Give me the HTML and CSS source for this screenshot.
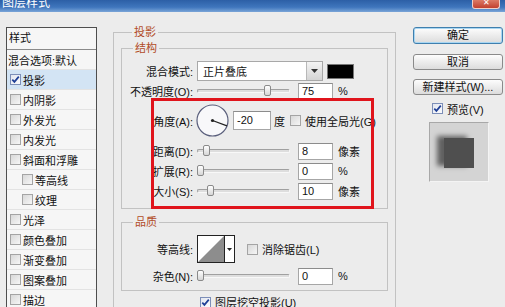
FILE: index.html
```html
<!DOCTYPE html>
<html>
<head>
<meta charset="utf-8">
<link rel="stylesheet" href="styles.css">
</head>
<body>
<div class="win">
  <div class="titlebar"><span class="title">图层样式</span><span class="close">✕</span></div>
  <div class="content">
    <div class="stylelist">
      <div class="lhead">样式</div>
      <div class="litem first">混合选项:默认</div>
      <div class="litem sel"><span class="cb on"><svg width="9" height="9" viewBox="0 0 9 9"><path d="M1.3 4.6 L3.4 6.9 L7.8 1.6" stroke="#1f3f96" stroke-width="1.7" fill="none"/></svg></span>投影</div>
      <div class="litem"><span class="cb"></span>内阴影</div>
      <div class="litem"><span class="cb"></span>外发光</div>
      <div class="litem"><span class="cb"></span>内发光</div>
      <div class="litem"><span class="cb"></span>斜面和浮雕</div>
      <div class="litem sub"><span class="cb"></span>等高线</div>
      <div class="litem sub"><span class="cb"></span>纹理</div>
      <div class="litem"><span class="cb"></span>光泽</div>
      <div class="litem"><span class="cb"></span>颜色叠加</div>
      <div class="litem"><span class="cb"></span>渐变叠加</div>
      <div class="litem"><span class="cb"></span>图案叠加</div>
      <div class="litem"><span class="cb"></span>描边</div>
    </div>

    <fieldset class="grp outer">
      <legend>投影</legend>
      <fieldset class="grp inner">
        <legend>结构</legend>
        <div class="row r-blend">
          <span class="lbl">混合模式:</span>
          <div class="select"><span class="seltext">正片叠底</span><span class="seldrop"><svg width="7" height="4" viewBox="0 0 7 4"><path d="M0 0 H7 L3.5 4 Z" fill="#333"/></svg></span></div>
          <span class="swatch"></span>
        </div>
        <div class="row r-op">
          <span class="lbl">不透明度(O):</span>
          <div class="slider"><div class="track"></div><span class="knob" style="left:67px"></span></div>
          <span class="input">75</span><span class="unit">%</span>
        </div>
        <div class="row r-angle">
          <span class="lbl">角度(A):</span>
          <svg class="dial" width="33" height="33" viewBox="0 0 33 33"><circle cx="16.5" cy="16.5" r="15.5" fill="#f8f8fa" stroke="#5a5f7c" stroke-width="1.2"/><line x1="16.5" y1="16.5" x2="31" y2="21.8" stroke="#222" stroke-width="1.3"/><circle cx="16.5" cy="16.5" r="1.6" fill="#222"/></svg>
          <span class="input ang">-20</span><span class="unit deg">度</span>
          <span class="cb gl"></span><span class="cbtext">使用全局光(G)</span>
        </div>
        <div class="row r-dist">
          <span class="lbl">距离(D):</span>
          <div class="slider"><div class="track"></div><span class="knob" style="left:6px"></span></div>
          <span class="input">8</span><span class="unit">像素</span>
        </div>
        <div class="row r-sm">
          <span class="lbl">扩展(R):</span>
          <div class="slider"><div class="track"></div><span class="knob" style="left:0px"></span></div>
          <span class="input">0</span><span class="unit">%</span>
        </div>
        <div class="row r-sm">
          <span class="lbl">大小(S):</span>
          <div class="slider"><div class="track"></div><span class="knob" style="left:10px"></span></div>
          <span class="input">10</span><span class="unit">像素</span>
        </div>
      </fieldset>

      <fieldset class="grp quality">
        <legend>品质</legend>
        <div class="row r-contour">
          <span class="lbl">等高线:</span>
          <div class="contour">
            <span class="cshape"><svg width="26" height="26" viewBox="0 0 26 26"><path d="M0 26 L26 0 L26 26 Z" fill="#8d8d8d"/></svg></span>
            <span class="cdrop"><svg width="5" height="3" viewBox="0 0 5 3"><path d="M0 0 H5 L2.5 3 Z" fill="#222"/></svg></span>
          </div>
          <span class="cb aa"></span><span class="cbtext">消除锯齿(L)</span>
        </div>
        <div class="row r-noise">
          <span class="lbl">杂色(N):</span>
          <div class="slider"><div class="track"></div><span class="knob" style="left:0px"></span></div>
          <span class="input">0</span><span class="unit">%</span>
        </div>
      </fieldset>

      <div class="knockout"><span class="cb on"><svg width="9" height="9" viewBox="0 0 9 9"><path d="M1.3 4.6 L3.4 6.9 L7.8 1.6" stroke="#1f3f96" stroke-width="1.7" fill="none"/></svg></span><span class="cbtext">图层挖空投影(U)</span></div>
    </fieldset>

    <div class="side">
      <div class="btn default">确定</div>
      <div class="btn b2">取消</div>
      <div class="btn b3">新建样式(W)...</div>
      <div class="preview-row"><span class="cb on"><svg width="9" height="9" viewBox="0 0 9 9"><path d="M1.3 4.6 L3.4 6.9 L7.8 1.6" stroke="#1f3f96" stroke-width="1.7" fill="none"/></svg></span><span class="cbtext">预览(V)</span></div>
      <div class="preview"><div class="square"></div></div>
    </div>
  </div>
  <div class="redbox"></div>
</div>
</body>
</html>
```

FILE: styles.css
```css
* { box-sizing: border-box; }
html, body { margin: 0; padding: 0; }
body {
  width: 505px; height: 307px; overflow: hidden;
  background: #ececec;
  font-family: "Liberation Sans", "Noto Sans CJK SC", sans-serif;
  font-size: 11px; color: #111;
}
.win { position: relative; width: 505px; height: 307px; overflow: hidden; }

.titlebar {
  height: 12px;
  background: linear-gradient(#2c5fa6, #3f76bd 60%, #7aa5d8);
  display: flex; justify-content: space-between; overflow: hidden;
}
.title { color: #fff; font-size: 12px; line-height: 12px; margin: -3px 0 0 2px; }
.close {
  width: 28px; height: 9px; margin-right: 5px;
  background: linear-gradient(#dc7a66, #c2412f);
  border: 1px solid #f0d0c8; border-top: 0; border-radius: 0 0 3px 3px;
  color: #fff; font-size: 8px; line-height: 6px; text-align: center;
}

.content { display: flex; align-items: flex-start; }

.stylelist {
  width: 91px; height: 300px; margin: 15px 0 0 6px;
  border: 1px solid #4e4e4e; background: #f6f6f6;
}
.lhead { height: 22px; line-height: 21px; padding-left: 2px; border-bottom: 1px solid #8a8a8a; }
.litem {
  height: 20px; display: flex; align-items: center; white-space: nowrap;
  padding-left: 3px; border-bottom: 1px solid #e3e3e3;
}
.litem.first { padding-left: 1px; }
.litem.sub { padding-left: 15px; }
.litem.sel { background: #d3e4f4; }
.litem .cb { margin-right: 2px; }

.cb {
  width: 11px; height: 11px; flex-shrink: 0;
  border: 1px solid #a4a4a4;
  background: linear-gradient(135deg, #d8d8d8, #f6f6f6);
  display: inline-flex; align-items: center; justify-content: center;
}
.cb.on { border-color: #7d8fb8; background: linear-gradient(135deg, #e2e6ef, #fbfbfd); }
.cbtext { margin-left: 4px; white-space: nowrap; }

fieldset.grp {
  margin: 0; min-width: 0;
  border: 1px solid #c2c2c2;
}
fieldset.grp legend {
  padding: 0 2px; margin-left: 11px;
  color: #b24c28; font-size: 11px; line-height: 14px;
}
.outer { width: 283px; height: 300px; margin: 13px 0 0 16px !important; padding: 0 7px; }
.inner { margin-top: 2px !important; padding: 0 0 8px 0; }
.quality { margin-top: 6px !important; padding: 0 0 5px 0; }

.row { display: flex; align-items: center; white-space: nowrap; }
.lbl { width: 71px; flex-shrink: 0; text-align: right; }
.r-blend { margin-top: 6px; height: 20px; }
.r-op { margin-top: 1px; height: 18px; }
.r-angle { margin-top: 4px; height: 33px; }
.r-dist { margin-top: 5px; height: 18px; }
.r-sm { margin-top: 2px; height: 18px; }
.r-contour { margin-top: 6px; height: 28px; }
.r-noise { margin-top: 4px; height: 18px; }

.select {
  margin-left: 4px; width: 126px; height: 20px;
  border: 1px solid #a8a8a8; background: #fff;
  display: flex; align-items: center; justify-content: space-between;
}
.seltext { padding-left: 5px; }
.seldrop {
  width: 16px; height: 18px; border-left: 1px solid #b8b8b8;
  background: linear-gradient(#f4f4f4, #d4d4d4);
  display: flex; align-items: center; justify-content: center;
}
.swatch { margin-left: 4px; width: 27px; height: 15px; background: #000; border: 1px solid #777; }

.slider { position: relative; margin-left: 4px; width: 93px; height: 18px; flex-shrink: 0; }
.track {
  position: absolute; left: 0; right: 0; top: 7px; height: 4px;
  border: 1px solid; border-color: #a0a0a0 #f8f8f8 #f8f8f8 #a0a0a0;
  background: #dedede; border-radius: 2px;
}
.knob {
  position: absolute; top: 3px; width: 7px; height: 11px;
  border: 1px solid #8a8a8a; border-radius: 2px;
  background: linear-gradient(#ffffff, #d6d6d6);
}

.input {
  margin-left: 8px; width: 35px; height: 17px; flex-shrink: 0;
  border: 1px solid #a6a6a6; border-top-color: #8c8c8c; background: #fff;
  padding-left: 3px; line-height: 15px;
}
.unit { margin-left: 5px; }
.dial { margin-left: 3px; flex-shrink: 0; }
.input.ang { margin-left: 4px; width: 38px; height: 19px; line-height: 17px; }
.unit.deg { margin-left: 3px; }
.cb.gl { margin-left: 5px; }

.contour {
  margin-left: 4px; width: 38px; height: 28px; flex-shrink: 0;
  border: 1px solid #222; background: #fff; display: flex;
}
.cshape { width: 26px; height: 26px; display: block; }
.cshape svg { display: block; }
.cdrop {
  width: 10px; border-left: 1px solid #222;
  display: flex; align-items: center; justify-content: center;
}
.cb.aa { margin-left: 12px; }

.knockout { margin: 4px 0 0 79px; height: 14px; display: flex; align-items: center; }

.side { width: 90px; margin: 15px 0 0 17px; }
.btn {
  display: block; width: 90px; height: 17px;
  border: 1px solid #8a8a8a; border-radius: 3px;
  background: linear-gradient(#fdfdfd, #ececec 50%, #dcdcdc);
  text-align: center; line-height: 15px; white-space: nowrap;
}
.btn.default { border-color: #3f7fae; box-shadow: inset 0 0 0 1px #a8d6f2; }
.btn.b2 { margin-top: 10px; height: 16px; line-height: 14px; }
.btn.b3 { margin-top: 9px; height: 16px; line-height: 14px; }
.preview-row { margin-top: 8px; height: 11px; padding-left: 19px; display: flex; align-items: center; }
.preview {
  margin: 8px 0 0 16px; width: 60px; height: 60px;
  background: #d4d4d4;
  border: 1px solid; border-color: #a8a8a8 #f4f4f4 #f4f4f4 #a8a8a8;
  padding: 15px 0 0 14px;
}
.square {
  width: 30px; height: 30px; background: #4f4f4f;
  box-shadow: -7px -2px 5px rgba(0,0,0,0.55);
}

.redbox {
  position: absolute; left: 151px; top: 98px; width: 223px; height: 111px;
  border: 3px solid #e0141c;
}
```
